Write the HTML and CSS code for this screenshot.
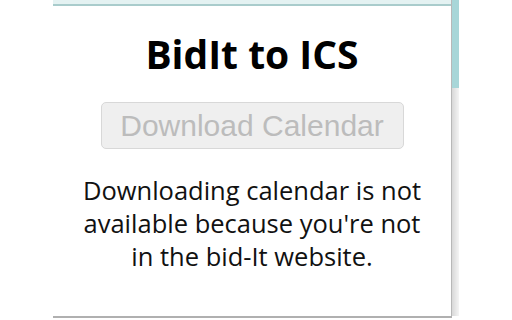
FILE: index.html
```html
<!DOCTYPE html>
<html>
<head>
<meta charset="utf-8">
<link rel="stylesheet" href="styles.css">
</head>
<body>
<div class="screen">
  <div class="window">
    <div class="topstrip"></div>
    <div class="row">
      <div class="popup">
        <h1 class="title">BidIt to ICS</h1>
        <button class="btn" disabled>Download Calendar</button>
        <p class="msg">Downloading calendar is not available because you're not in the bid-It website.</p>
      </div>
      <div class="edge"><div class="edge-teal"></div><div class="edge-gray"></div></div>
    </div>
    <div class="bottomline"></div>
  </div>
</div>
</body>
</html>
```

FILE: styles.css
```css
html, body {
  margin: 0;
  padding: 0;
  background: #ffffff;
}
.screen {
  width: 512px;
  height: 320px;
  overflow: hidden;
  padding-left: 53px;
  box-sizing: border-box;
}
.window {
  width: 406px;
  display: flex;
  flex-direction: column;
}
.topstrip {
  height: 4px;
  width: 399px;
  background: #e4f2f2;
  border-bottom: 2px solid #a9cccc;
}
.row {
  display: flex;
  height: 310px;
}
.popup {
  width: 399px;
  background: #fff;
  display: flex;
  flex-direction: column;
  align-items: center;
  font-family: "Open Sans", "Noto Sans", sans-serif;
}
.edge {
  width: 7px;
  display: flex;
  flex-direction: column;
  margin-top: -6px;
  border-left: 1px solid #b8b8b8;
}
.edge-teal {
  height: 88px;
  background: #a8d6d8;
}
.edge-gray {
  flex: 1;
  background: linear-gradient(to right, #d8d8d8, #f4f4f4);
}
.bottomline {
  width: 399px;
  height: 2px;
  background: #b0b0b0;
}
.title {
  margin: 22px 0 0 0;
  font-size: 39px;
  font-weight: 700;
  line-height: 52px;
  color: #000;
}
.btn {
  margin-top: 22px;
  width: 303px;
  height: 47px;
  background: #efefef;
  border: 1px solid #d8d8d8;
  border-radius: 5px;
  color: #bcbcbc;
  font-family: "Liberation Sans", Arial, sans-serif;
  font-size: 30px;
  padding: 0;
}
.msg {
  margin: 25px 0 0 0;
  width: 350px;
  text-align: center;
  font-size: 25.5px;
  line-height: 33px;
  color: #111;
}
```
